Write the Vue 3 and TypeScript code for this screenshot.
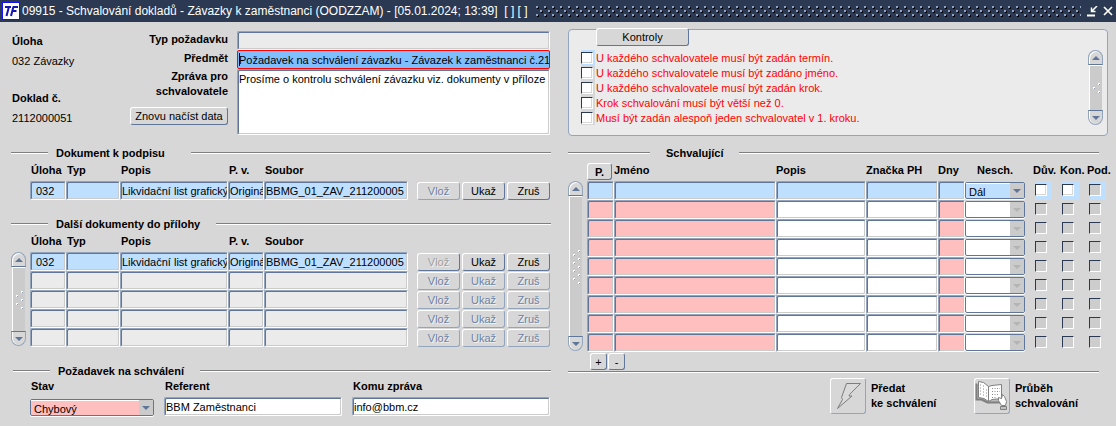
<script setup lang="ts">
import { ref } from 'vue'

interface DocRow {
  uloha: string
  typ: string
  popis: string
  verze: string
  soubor: string
}

interface Approver {
  poradi: string
  jmeno: string
  popis: string
  znacka: string
  dny: string
  nesch: string
}

interface Check {
  text: string
  done: boolean
}

const filledDoc = (): DocRow => ({
  uloha: '032',
  typ: '',
  popis: 'Likvidační list grafický',
  verze: 'Originál',
  soubor: 'BBMG_01_ZAV_211200005',
})
const emptyDoc = (): DocRow => ({ uloha: '', typ: '', popis: '', verze: '', soubor: '' })

const docTables = ref([
  { id: 'sign', title: 'Dokument k podpisu', scroll: false, rows: [filledDoc()] },
  {
    id: 'attach',
    title: 'Další dokumenty do přílohy',
    scroll: true,
    rows: [filledDoc(), emptyDoc(), emptyDoc(), emptyDoc(), emptyDoc()],
  },
])

const actions = ['Vlož', 'Ukaž', 'Zruš']

const checks = ref<Check[]>([
  { text: 'U každého schvalovatele musí být zadán termín.', done: false },
  { text: 'U každého schvalovatele musí být zadáno jméno.', done: false },
  { text: 'U každého schvalovatele musí být zadán krok.', done: false },
  { text: 'Krok schvalování musí být větší než 0.', done: false },
  { text: 'Musí být zadán alespoň jeden schvalovatel v 1. kroku.', done: false },
])

const approvers = ref<Approver[]>(
  Array.from({ length: 9 }, (_, i) => ({
    poradi: '',
    jmeno: '',
    popis: '',
    znacka: '',
    dny: '',
    nesch: i === 0 ? 'Dál' : '',
  })),
)

const flags = ['Dův.', 'Kon.', 'Pod.']

const typ = ref('')
const predmet = ref('Požadavek na schválení závazku - Závazek k zaměstnanci č.21')
const zprava = ref('Prosíme o kontrolu schválení závazku viz. dokumenty v příloze')
const stav = ref('Chybový')
const referent = ref('BBM Zaměstnanci')
const komu = ref('info@bbm.cz')
</script>

<template>
  <div class="window">
    <header class="titlebar">
      <svg class="logo" width="18" height="18" viewBox="0 0 18 18" aria-hidden="true">
        <rect x="0.5" y="0.5" width="17" height="17" fill="#fff" stroke="#1212ff" />
        <path d="M3 5h6M7 4.500L4.500 14" stroke="#1414b4" stroke-width="2" fill="none" />
        <path d="M11 5h5M10.500 9h4M11.500 4.500L9 14" stroke="#1414b4" stroke-width="2" fill="none" />
      </svg>
      <h1>09915 - Schvalování dokladů - Závazky k zaměstnanci (OODZZAM) - [05.01.2024; 13:39]&nbsp; [ ] [ ]</h1>
      <svg class="grip" height="11" aria-hidden="true">
        <defs>
          <pattern id="grip" width="8" height="8" patternUnits="userSpaceOnUse">
            <path d="M1 1h2v2H1zM5 5h2v2H5z" fill="#000" />
            <path d="M0 0h2v2H0zM4 4h2v2H4z" fill="#8fa5c1" />
          </pattern>
        </defs>
        <rect width="100%" height="11" fill="url(#grip)" />
      </svg>
      <button class="win-btn" type="button" aria-label="Minimalizovat">
        <svg width="11" height="11" viewBox="0 0 11 11">
          <path d="M0 9.500h8" stroke="#fff" stroke-width="2" />
          <path d="M10 0L5 5M4.500 1.500v4h4" stroke="#fff" stroke-width="1.500" fill="none" />
        </svg>
      </button>
      <button class="win-btn" type="button" aria-label="Zavřít">
        <svg width="11" height="11" viewBox="0 0 11 11">
          <path d="M1 1l8 8M9 1l-8 8" stroke="#fff" stroke-width="1.700" />
        </svg>
      </button>
    </header>

    <main class="columns">
      <div class="left">
        <section class="request">
          <dl class="facts">
            <dt>Úloha</dt>
            <dd>032 Závazky</dd>
            <dt>Doklad č.</dt>
            <dd>2112000051</dd>
          </dl>
          <div class="captions">
            <label for="typ">Typ požadavku</label>
            <label for="predmet">Předmět</label>
            <label class="two-line" for="zprava">Zpráva pro<br />schvalovatele</label>
            <button class="btn reload" type="button">Znovu načíst data</button>
          </div>
          <div class="fields">
            <input id="typ" v-model="typ" class="field muted" type="text" />
            <input id="predmet" v-model="predmet" class="field focused" type="text" />
            <textarea id="zprava" v-model="zprava" class="field"></textarea>
          </div>
        </section>

        <section v-for="table in docTables" :key="table.id" :class="['docs', table.id]">
          <h2 class="rule"><span>{{ table.title }}</span></h2>
          <div class="grid-wrap">
            <div v-if="table.scroll" class="scrollbar">
              <button type="button" aria-label="Nahoru"><i class="tri up"></i></button>
              <div class="track">
                <svg width="9" height="18" viewBox="0 0 9 18" aria-hidden="true">
                  <path d="M6 0h2v2H6zM1 4h2v2H1zM6 8h2v2H6zM1 12h2v2H1zM6 16h2v2H6z" fill="#fff" />
                  <path d="M7 1h1v1H7zM2 5h1v1H2zM7 9h1v1H7zM2 13h1v1H2zM7 17h1v1H7z" fill="#8c9bb0" />
                </svg>
              </div>
              <button type="button" aria-label="Dolů"><i class="tri down"></i></button>
            </div>
            <table class="grid">
              <colgroup>
                <col class="w36" /><col class="w54" /><col /><col class="w36" /><col class="w144" />
                <col class="w8" /><col class="w45" /><col class="w45" /><col class="w45" />
              </colgroup>
              <thead>
                <tr>
                  <th>Úloha</th>
                  <th>Typ</th>
                  <th>Popis</th>
                  <th>P. v.</th>
                  <th>Soubor</th>
                  <td colspan="4"></td>
                </tr>
              </thead>
              <tbody>
                <tr v-for="(row, i) in table.rows" :key="i" :class="i === 0 ? 'current' : 'muted-row'">
                  <td><input v-model="row.uloha" class="field code" aria-label="Úloha" /></td>
                  <td><input v-model="row.typ" class="field" aria-label="Typ" /></td>
                  <td><input v-model="row.popis" class="field" aria-label="Popis" /></td>
                  <td><input v-model="row.verze" class="field" aria-label="P. v." /></td>
                  <td><input v-model="row.soubor" class="field" aria-label="Soubor" /></td>
                  <td></td>
                  <td v-for="(a, n) in actions" :key="a">
                    <button
                      type="button"
                      :class="['btn', 'row-btn', { grey: table.scroll && i === 0 && n === 0 }]"
                      :disabled="i > 0 || n === 0"
                    >
                      {{ a }}
                    </button>
                  </td>
                </tr>
              </tbody>
            </table>
          </div>
        </section>

        <section class="status">
          <h2 class="rule"><span>Požadavek na schválení</span></h2>
          <div class="status-fields">
            <div class="item stav">
              <label for="stav">Stav</label>
              <span class="combo pink">
                <select id="stav" v-model="stav">
                  <option>Chybový</option>
                </select>
                <span class="arrow"><i class="tri down"></i></span>
              </span>
            </div>
            <div class="item referent">
              <label for="referent">Referent</label>
              <input id="referent" v-model="referent" class="field" type="text" />
            </div>
            <div class="item komu">
              <label for="komu">Komu zpráva</label>
              <input id="komu" v-model="komu" class="field" type="text" />
            </div>
          </div>
        </section>
      </div>

      <div class="right">
        <section class="panel">
          <button class="btn kontroly" type="button">Kontroly</button>
          <div class="panel-body">
            <ul class="checks">
              <li v-for="(c, i) in checks" :key="i">
                <label>
                  <span :class="['tick', { lit: i === 0 }]"><input v-model="c.done" type="checkbox" /></span>
                  {{ c.text }}
                </label>
              </li>
            </ul>
            <div class="scrollbar">
              <button type="button" aria-label="Nahoru"><i class="tri up"></i></button>
              <div class="track">
                <svg width="9" height="10" viewBox="0 0 9 10" aria-hidden="true">
                  <path d="M6 0h2v2H6zM1 4h2v2H1zM6 8h2v2H6z" fill="#fff" />
                  <path d="M7 1h1v1H7zM2 5h1v1H2zM7 9h1v1H7z" fill="#8c9bb0" />
                </svg>
              </div>
              <button type="button" aria-label="Dolů"><i class="tri down"></i></button>
            </div>
          </div>
        </section>

        <section class="approvers">
          <h2 class="rule"><span>Schvalující</span></h2>
          <div class="grid-wrap">
            <div class="scrollbar">
              <button type="button" aria-label="Nahoru"><i class="tri up"></i></button>
              <div class="track">
                <svg width="9" height="34" viewBox="0 0 9 34" aria-hidden="true">
                  <path
                    d="M6 0h2v2H6zM1 4h2v2H1zM6 8h2v2H6zM1 12h2v2H1zM6 16h2v2H6zM1 20h2v2H1zM6 24h2v2H6zM1 28h2v2H1zM6 32h2v2H6z"
                    fill="#fff"
                  />
                  <path
                    d="M7 1h1v1H7zM2 5h1v1H2zM7 9h1v1H7zM2 13h1v1H2zM7 17h1v1H7zM2 21h1v1H2zM7 25h1v1H7zM2 29h1v1H2zM7 33h1v1H7z"
                    fill="#8c9bb0"
                  />
                </svg>
              </div>
              <button type="button" aria-label="Dolů"><i class="tri down"></i></button>
            </div>
            <table class="grid">
              <colgroup>
                <col class="w27" /><col /><col class="w90" /><col class="w72" /><col class="w27" />
                <col class="w68" /><col class="w27" /><col class="w27" /><col class="w27" />
              </colgroup>
              <thead>
                <tr>
                  <th><button class="btn order" type="button">P.</button></th>
                  <th>Jméno</th>
                  <th>Popis</th>
                  <th>Značka PH</th>
                  <th>Dny</th>
                  <th class="inset">Nesch.</th>
                  <th v-for="f in flags" :key="f">{{ f }}</th>
                </tr>
              </thead>
              <tbody>
                <tr v-for="(row, i) in approvers" :key="i" :class="{ current: i === 0 }">
                  <td><input v-model="row.poradi" class="field pink" aria-label="Pořadí" /></td>
                  <td><input v-model="row.jmeno" class="field pink" aria-label="Jméno" /></td>
                  <td><input v-model="row.popis" class="field" aria-label="Popis" /></td>
                  <td><input v-model="row.znacka" class="field" aria-label="Značka PH" /></td>
                  <td><input v-model="row.dny" class="field pink" aria-label="Dny" /></td>
                  <td>
                    <span :class="['combo', { off: i > 0 }]">
                      <select v-model="row.nesch" aria-label="Nesch." :disabled="i > 0">
                        <option></option>
                        <option>Dál</option>
                      </select>
                      <span class="arrow"><i class="tri down"></i></span>
                    </span>
                  </td>
                  <td v-for="(f, n) in flags" :key="f">
                    <span :class="['flag', { lit: i === 0 }]">
                      <input type="checkbox" :aria-label="f" :disabled="i > 0 || n === 2" />
                    </span>
                  </td>
                </tr>
              </tbody>
            </table>
          </div>
          <div class="row-tools">
            <button class="btn" type="button">+</button>
            <button class="btn" type="button">-</button>
          </div>
        </section>

        <section class="submit">
          <div class="action">
            <button id="predat" class="btn icon-btn" type="button">
              <svg width="34" height="34" viewBox="0 0 34 34" aria-hidden="true">
                <path
                  d="M15.500 4.500H29.500L18.500 15.500L18 17H21L6.500 29.500L11.500 20.500L10.500 18.500Z"
                  fill="#dadada"
                  stroke="#7d7d7d"
                />
              </svg>
            </button>
            <label for="predat">Předat<br />ke schválení</label>
          </div>
          <div class="action">
            <button id="prubeh" class="btn icon-btn" type="button">
              <svg width="34" height="34" viewBox="0 0 34 34" aria-hidden="true">
                <path d="M1.500 4.500V20.500L6.500 20.500L12.500 23.500H26.500V21" fill="#b8b8b8" stroke="#808080" stroke-width="2" />
                <path d="M3.500 2.500L8.500 3.500L13.500 7.500V22.500L9 19.500L3.500 18.500Z" fill="#fff" stroke="#808080" />
                <path d="M13.500 7.500L17 6.500L26.500 5.500V19.500L17 20.500L13.500 22.500Z" fill="#fff" stroke="#808080" />
                <path
                  d="M5 6h1M8 7h1M5 9h1M8 10h1M11 11h1M5 12h1M8 13h1M11 14h1M5 15h1M8 16h1M11 17h1M17 9.500h8M17 12.500h8M17 15.500h6M17 18.500h5"
                  stroke="#8a8a8a"
                  stroke-dasharray="1 1.500"
                  fill="none"
                />
                <path d="M23.500 18.500L26.500 19.500L27.500 15.500L29.500 17.500L31.500 22.500L30.500 26.500H26.500L23.500 21.500Z" fill="#fff" stroke="#808080" />
                <path d="M25.500 27.500H31.500V30.500H25.500Z" fill="#c0c0c0" stroke="#808080" />
              </svg>
            </button>
            <label for="prubeh">Průběh<br />schvalování</label>
          </div>
        </section>
      </div>
    </main>
  </div>
</template>

<style>
body {
  margin: 0;
  background: #d7d7d7;
}
</style>

<style scoped>
.window {
  --dark: #5f7699;
  --edge: #93a5bd;
  min-height: 100vh;
  min-width: 1000px;
  background: #d7d7d7;
  color: #000;
  font: 11px/15px 'Liberation Sans', Arial, sans-serif;
}
.window *,
.window *::before,
.window *::after {
  box-sizing: border-box;
}
h1,
h2,
dl,
dd,
ul {
  margin: 0;
  padding: 0;
}
button,
input,
select,
textarea {
  font: inherit;
  color: inherit;
  margin: 0;
  border-radius: 0;
}

/* title bar */
.titlebar {
  display: flex;
  align-items: center;
  height: 22px;
  padding: 0 2px;
  background: #2b3a52;
  color: #fff;
}
.logo {
  flex: none;
}
.titlebar h1 {
  margin-left: 2px;
  font-size: 12px;
  font-weight: 400;
  line-height: 20px;
  white-space: nowrap;
}
.grip {
  flex: 1;
  min-width: 0;
  margin: 0 6px 0 8px;
}
.win-btn {
  display: flex;
  padding: 0;
  border: 0;
  background: none;
}
.win-btn + .win-btn {
  margin: 0 0 0 5px;
}

/* page columns */
.columns {
  display: grid;
  grid-template-columns: 540fr 546fr;
  gap: 17px;
  padding: 7px 2px 10px 11px;
}

/* shared controls */
.field {
  display: block;
  width: 100%;
  height: 19px;
  padding: 0 0 0 1px;
  border: 1px solid;
  border-color: #93a5bd #fff #fff #93a5bd;
  border-radius: 2px;
  background: #fff;
  box-shadow: inset 1px 1px #5f7699, inset -1px -1px #cbcbcb;
  outline: none;
  text-overflow: clip;
}
.field.muted,
.muted-row .field {
  background: #ebebeb;
}
.field.pink {
  background: #ffbfbf;
}
.current .field {
  background: #bfdfff;
}
.field.focused {
  border-color: #f00;
  background: linear-gradient(#000, #000) 1px 2px / 1px 13px no-repeat #80bfff;
  box-shadow: none;
}
.field.code {
  padding-left: 5px;
}
textarea.field {
  height: 66px;
  padding: 2px 0 0 1px;
  resize: none;
  overflow: hidden;
}
.btn {
  padding: 1px 0 0;
  border: 1px solid;
  border-color: #fff var(--dark) var(--dark) #fff;
  border-radius: 3px;
  background: #d7d7d7;
  text-align: center;
}
.btn:disabled {
  border-color: #fff var(--edge) var(--edge) #fff;
  color: #6c83a5;
  text-shadow: 1px 1px #f2f2f2;
}
.btn.grey:disabled {
  border-color: #fff var(--dark) var(--dark) #fff;
  color: #a0a0a0;
}
.tri {
  width: 0;
  height: 0;
  border: 4px solid transparent;
}
.tri.up {
  border-top: 0;
  border-bottom-color: var(--dark);
}
.tri.down {
  border-bottom: 0;
  border-top-color: var(--dark);
}
.combo {
  display: grid;
  height: 17px;
  border: 1px solid var(--dark);
  border-radius: 2px;
  background: #fff;
  box-shadow: 0 1px #fff;
}
.combo select {
  grid-area: 1 / 1;
  width: 100%;
  height: 15px;
  padding: 2px 0 0 3px;
  border: 0;
  border-top: 1px solid #fff;
  background: transparent;
  appearance: none;
  outline: none;
  line-height: 12px;
  opacity: 1;
}
.combo .arrow {
  grid-area: 1 / 1;
  justify-self: end;
  display: flex;
  align-items: center;
  justify-content: center;
  width: 14px;
  background: #cbcbcb;
  pointer-events: none;
}
.combo.off .tri {
  border-top-color: #b4b4b4;
}
.combo.pink {
  background: #ffbfbf;
}
.current .combo {
  background: #bfdfff;
}
input[type='checkbox'] {
  display: block;
  flex: none;
  width: 12px;
  height: 12px;
  border: 1px solid;
  border-color: #2b3a52 #fff #fff #2b3a52;
  background: #fff;
  box-shadow: inset -1px -1px #d7d7d7;
  appearance: none;
}
input[type='checkbox']:disabled {
  background: #cdcdcd;
  box-shadow: none;
}
.scrollbar {
  display: flex;
  flex-direction: column;
  flex: none;
  width: 15px;
}
.scrollbar button {
  display: flex;
  align-items: center;
  justify-content: center;
  height: 15px;
  padding: 0;
  border: 1px solid var(--edge);
  background: #d7d7d7;
}
.scrollbar button:first-child {
  border-bottom-color: var(--dark);
  border-radius: 8px 8px 0 0;
  box-shadow: inset 1px 1px #fff;
}
.scrollbar button:last-child {
  border-top-color: var(--dark);
  border-radius: 0 0 8px 8px;
  box-shadow: inset 1px 0 #fff;
}
.track {
  display: flex;
  flex: 1;
  align-items: center;
  justify-content: center;
  margin: 0 1px;
  border-left: 1px solid #fff;
  border-top: 1px solid #fff;
  background: #cbcbcb;
}

/* section headings */
.rule {
  display: flex;
  align-items: center;
  height: 14px;
  font-size: 11px;
  font-weight: 700;
  line-height: 14px;
}
.rule::before,
.rule::after {
  content: '';
  width: 37px;
  height: 2px;
  border-top: 1px solid #7f7f7f;
  background: #fff;
}
.rule::after {
  flex: 1;
}
.rule span {
  padding: 0 16px 0 8px;
}

/* request header */
.request {
  display: grid;
  grid-template-columns: 118px 98px 1fr;
  padding: 1px 0 0 1px;
  height: 107px;
}
.facts {
  padding-top: 1px;
  line-height: 20px;
}
.facts dt,
label,
th {
  font-weight: 700;
}
.facts dd + dt {
  margin-top: 17px;
}
.captions {
  display: flex;
  flex-direction: column;
  align-items: flex-end;
  line-height: 19px;
  text-align: right;
  white-space: nowrap;
}
.captions .two-line {
  margin-top: 1px;
  line-height: 15px;
}
.reload {
  width: 98px;
  height: 18px;
  margin-top: 8px;
  line-height: 15px;
}
.fields {
  padding: 1px 1px 0 9px;
}

/* document and approver tables */
.docs.sign {
  margin-top: 10px;
}
.docs.sign .rule span {
  padding-right: 26px;
}
.docs.attach,
.status {
  margin-top: 17px;
}
.grid-wrap {
  display: flex;
  gap: 4px;
}
.sign .grid-wrap {
  padding-left: 19px;
}
.grid-wrap .scrollbar {
  margin: 21px 0 1px;
}
.grid {
  flex: 1;
  width: 0;
  table-layout: fixed;
  border-collapse: collapse;
}
.grid th,
.grid td {
  height: 19px;
  padding: 0;
  text-align: left;
  white-space: nowrap;
}
.grid thead th,
.grid thead td {
  height: 21px;
}
.docs th {
  padding-left: 1px;
}
.grid th.inset {
  padding-left: 12px;
}
.w8 { width: 8px; }
.w27 { width: 27px; }
.w36 { width: 36px; }
.w45 { width: 45px; }
.w54 { width: 54px; }
.w68 { width: 68px; }
.w72 { width: 72px; }
.w90 { width: 90px; }
.w144 { width: 144px; }
.row-btn {
  display: block;
  width: 43px;
  height: 18px;
  margin-left: 1px;
}
.order {
  display: block;
  width: 25px;
  height: 17px;
  margin-top: 2px;
  font-weight: 700;
}
.grid .combo {
  width: 60px;
}
.flag {
  display: block;
  width: 17px;
  height: 19px;
  margin-left: 2px;
  padding-top: 3px;
}
.lit {
  background: #bfdfff;
}

/* status block */
.status .rule {
  padding-left: 2px;
}
.status-fields {
  display: grid;
  grid-template-columns: 124fr 178fr 198fr;
  gap: 10px;
  padding: 0 1px 0 19px;
}
.item label {
  display: block;
  height: 19px;
  padding: 0 1px;
  line-height: 17px;
}
.stav .combo {
  margin-top: 2px;
}

/* checks */
.panel {
  height: 107px;
  margin-right: 6px;
  padding: 0 4px 0 12px;
  border: 1px solid var(--edge);
  border-radius: 4px;
  background: #ebebeb;
}
.kontroly {
  display: block;
  width: 93px;
  height: 18px;
  margin: -2px 0 0 15px;
}
.panel-body {
  display: flex;
  justify-content: space-between;
  margin-top: 4px;
}
.checks {
  list-style: none;
}
.checks label {
  display: flex;
  gap: 1px;
  height: 15px;
  font-weight: 400;
  color: #f00;
  line-height: 17px;
}
.tick {
  width: 14px;
  height: 15px;
  padding-top: 2px;
}
.tick:not(.lit) {
  background: #d7d7d7;
}

/* approvers */
.approvers {
  margin-top: 10px;
}
.approvers .rule {
  margin-right: 15px;
}
.approvers .rule::before {
  width: 82px;
}
.approvers .rule span {
  padding: 0 16px;
}
.row-tools {
  display: flex;
  gap: 1px;
  margin-top: 1px;
  padding-left: 22px;
}
.row-tools .btn {
  width: 17px;
  height: 17px;
}
.submit {
  display: flex;
  justify-content: flex-end;
  margin: 1px 15px 0 0;
  padding: 6px 0 0;
  border-top: 1px solid #7f7f7f;
  box-shadow: inset 0 1px #fff;
}
.action {
  display: flex;
  align-items: center;
  gap: 5px;
  width: 144px;
}
.action + .action {
  width: 125px;
}
.icon-btn {
  display: flex;
  flex: none;
  width: 36px;
  height: 36px;
  padding: 0;
  border-color: #fff var(--edge) var(--edge) #fff;
}
</style>
